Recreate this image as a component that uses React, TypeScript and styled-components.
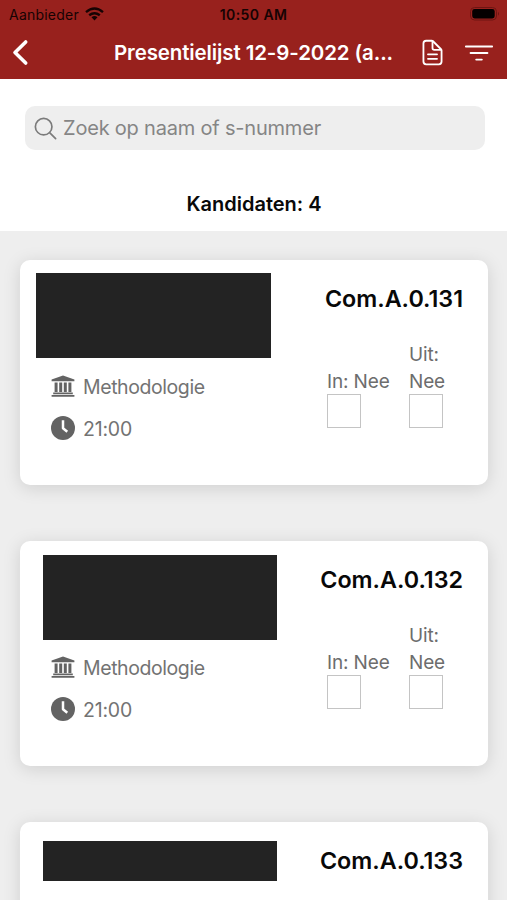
import React from "react";
import styled, { createGlobalStyle } from "styled-components";
import { IoDocumentTextOutline, IoFilterOutline, IoSearchOutline } from "react-icons/io5";

const GlobalStyle = createGlobalStyle`
  * { box-sizing: border-box; }
  body {
    margin: 0;
    background: #eeeeee;
    font-family: Inter, "Liberation Sans", sans-serif;
    overflow: hidden;
  }
`;

const Screen = styled.div`
  width: 507px;
  height: 900px;
  overflow: hidden;
  display: flex;
  flex-direction: column;
  background: #eeeeee;
`;

const Header = styled.header`
  height: 79px;
  flex: none;
  background: #98211d;
`;

const StatusBar = styled.div`
  height: 27px;
  display: grid;
  grid-template-columns: 1fr auto 1fr;
  align-items: center;
  padding: 1px 7px 0 9px;
  color: #160303;
`;

const Carrier = styled.div`
  display: flex;
  align-items: center;
  gap: 6px;
  font-size: 14px;
  letter-spacing: 0.22px;
`;

const Clock = styled.div`
  margin-right: 2px;
  font-size: 14px;
  font-weight: 600;
  letter-spacing: 0.42px;
`;

const BatteryIcon = styled.svg`
  justify-self: end;
`;

const NavBar = styled.div`
  height: 52px;
  display: flex;
  align-items: center;
  padding: 0 13px 1px 12px;
  color: #fff;
`;

const IconButton = styled.button`
  display: flex;
  padding: 0;
  border: 0;
  background: none;
  color: inherit;
`;

const Title = styled.h1`
  flex: 1;
  margin: 0 20px 0 85px;
  white-space: nowrap;
  font-size: 20.5px;
  line-height: 26px;
  font-weight: 600;
  letter-spacing: -0.12px;
`;

const Actions = styled.div`
  display: flex;
  align-items: center;
  gap: 17px;
`;

const Top = styled.section`
  height: 152px;
  flex: none;
  display: flex;
  flex-direction: column;
  align-items: center;
  background: #fff;
  padding: 27px 22px 0 25px;
`;

const SearchBox = styled.label`
  width: 100%;
  height: 44px;
  display: flex;
  align-items: center;
  gap: 4px;
  padding-left: 7px;
  border-radius: 10px;
  background: #eeeeee;
  color: #7b7b7b;
`;

const SearchInput = styled.input`
  flex: 1;
  padding: 0;
  border: 0;
  outline: 0;
  background: none;
  font: 400 20px/26px Inter, "Liberation Sans", sans-serif;
  letter-spacing: -0.2px;
  &::placeholder { color: #858585; opacity: 1; }
`;

const Count = styled.p`
  margin: 41px 2px 0 0;
  font-size: 20px;
  line-height: 26px;
  font-weight: 600;
  color: #090909;
`;

const List = styled.main`
  display: flex;
  flex-direction: column;
  gap: 56px;
  padding: 29px 19px 0 20px;
`;

const Card = styled.article`
  height: 225px;
  flex: none;
  display: flex;
  justify-content: space-between;
  border-radius: 10px;
  background: #fff;
  box-shadow: 0 3px 18px rgba(0, 0, 0, 0.13);
`;

const Person = styled.div`
  display: flex;
  flex-direction: column;
`;

const Redacted = styled.div<{ $left: number; $top: number; $height: number }>`
  width: 234.5px;
  height: ${(p) => p.$height}px;
  margin: ${(p) => `${p.$top}px 0 ${98 - p.$top - p.$height}px ${p.$left}px`};
  background: #232323;
`;

const Detail = styled.div`
  display: flex;
  align-items: center;
  gap: 8px;
  height: 26px;
  margin: 16px 0 0 31px;
  font-size: 19.5px;
  letter-spacing: -0.2px;
  color: #737373;
  svg { color: #636363; flex: none; position: relative; top: -1px; }
`;

const Subject = styled.span`
  letter-spacing: -0.42px;
`;

const Attendance = styled.div`
  display: flex;
  flex-direction: column;
  width: 161px;
  padding: 25px 25px 0 0;
`;

const Room = styled.h2`
  align-self: flex-end;
  margin: 0;
  font-size: 23.3px;
  line-height: 28px;
  font-weight: 600;
  white-space: nowrap;
  color: #080808;
`;

const Checks = styled.div`
  display: flex;
  align-items: flex-end;
  gap: 17px;
  height: 115px;
`;

const Check = styled.label<{ $width: number }>`
  width: ${(p) => p.$width}px;
  display: flex;
  flex-direction: column;
  font-size: 19px;
  line-height: 27px;
  letter-spacing: -0.15px;
  color: #6d6d6d;
`;

const Box = styled.input`
  appearance: none;
  width: 34px;
  height: 34px;
  margin: -1px 0 0;
  border: 1.5px solid #c4c4c4;
  background: #fff;
`;

function InstitutionIcon() {
  return (
    <svg width="24" height="24" viewBox="0 0 24 24" fill="currentColor">
      <path d="M12 1.4L23.4 5.6V7.2H.6V5.6Z" />
      <path d="M3.6 8.5H6.6V18H3.6ZM8.2 8.5H11.2V18H8.2ZM12.8 8.5H15.8V18H12.8ZM17.4 8.5H20.4V18H17.4Z" />
      <path d="M2.2 18.5H21.8V20.2H2.2ZM.6 21H23.4V22.8H.6Z" />
    </svg>
  );
}

function TimeIcon() {
  return (
    <svg width="24" height="24" viewBox="0 0 24 24">
      <circle cx="12" cy="12" r="12" fill="currentColor" />
      <path d="M12 5.4V12.3L15.3 15" fill="none" stroke="#fff" strokeWidth="2.5" strokeLinecap="square" strokeLinejoin="round" />
    </svg>
  );
}

type Candidate = {
  room: string;
  left: number;
  top: number;
  height: number;
  subject?: string;
  time?: string;
};

const candidates: Candidate[] = [
  { room: "Com.A.0.131", left: 16, top: 13, height: 85, subject: "Methodologie", time: "21:00" },
  { room: "Com.A.0.132", left: 22.5, top: 14, height: 85, subject: "Methodologie", time: "21:00" },
  { room: "Com.A.0.133", left: 22.5, top: 19, height: 40 },
];

export default function App() {
  return (
    <>
      <GlobalStyle />
      <Screen>
        <Header>
          <StatusBar>
            <Carrier>
              <span>Aanbieder</span>
              <svg width="19" height="14" viewBox="0 0 19 14" fill="none" stroke="currentColor" strokeWidth="2.4">
                <path d="M1 5.1Q9.5-2.1 18 5.1M4.2 8.3Q9.5 4 14.8 8.3" />
                <path d="M6.5 10.2Q9.5 7.9 12.5 10.2L9.5 13.4Z" fill="currentColor" stroke="none" />
              </svg>
            </Carrier>
            <Clock>10:50 AM</Clock>
            <BatteryIcon width="30" height="14" viewBox="0 0 30 14">
              <rect x="0.5" y="0.5" width="26" height="12.5" rx="4" fill="none" stroke="#6e1512" />
              <rect x="2.2" y="2" width="22.5" height="9.5" rx="2.4" fill="#050000" />
              <path d="M28 4.7Q30 6.7 28 8.7Z" fill="#6e1512" />
            </BatteryIcon>
          </StatusBar>
          <NavBar>
            <IconButton aria-label="Terug">
              <svg width="17" height="28" viewBox="0 0 17 28" fill="none" stroke="currentColor" strokeWidth="3.6" strokeLinecap="round" strokeLinejoin="round">
                <path d="M13.7 3L3 13.5L13.7 24" />
              </svg>
            </IconButton>
            <Title>Presentielijst 12-9-2022 (a...</Title>
            <Actions>
              <IconButton aria-label="Document"><IoDocumentTextOutline size={29} /></IconButton>
              <IconButton aria-label="Filter"><IoFilterOutline size={30} /></IconButton>
            </Actions>
          </NavBar>
        </Header>
        <Top>
          <SearchBox>
            <IoSearchOutline size={27} />
            <SearchInput placeholder="Zoek op naam of s-nummer" />
          </SearchBox>
          <Count>Kandidaten: 4</Count>
        </Top>
        <List>
          {candidates.map((c) => (
            <Card key={c.room}>
              <Person>
                <Redacted $left={c.left} $top={c.top} $height={c.height} />
                {c.subject && <Detail><InstitutionIcon /><Subject>{c.subject}</Subject></Detail>}
                {c.time && <Detail><TimeIcon /><span>{c.time}</span></Detail>}
              </Person>
              <Attendance>
                <Room>{c.room}</Room>
                {c.time && (
                  <Checks>
                    <Check $width={65}>In: Nee<Box type="checkbox" /></Check>
                    <Check $width={40}>Uit: Nee<Box type="checkbox" /></Check>
                  </Checks>
                )}
              </Attendance>
            </Card>
          ))}
        </List>
      </Screen>
    </>
  );
}
